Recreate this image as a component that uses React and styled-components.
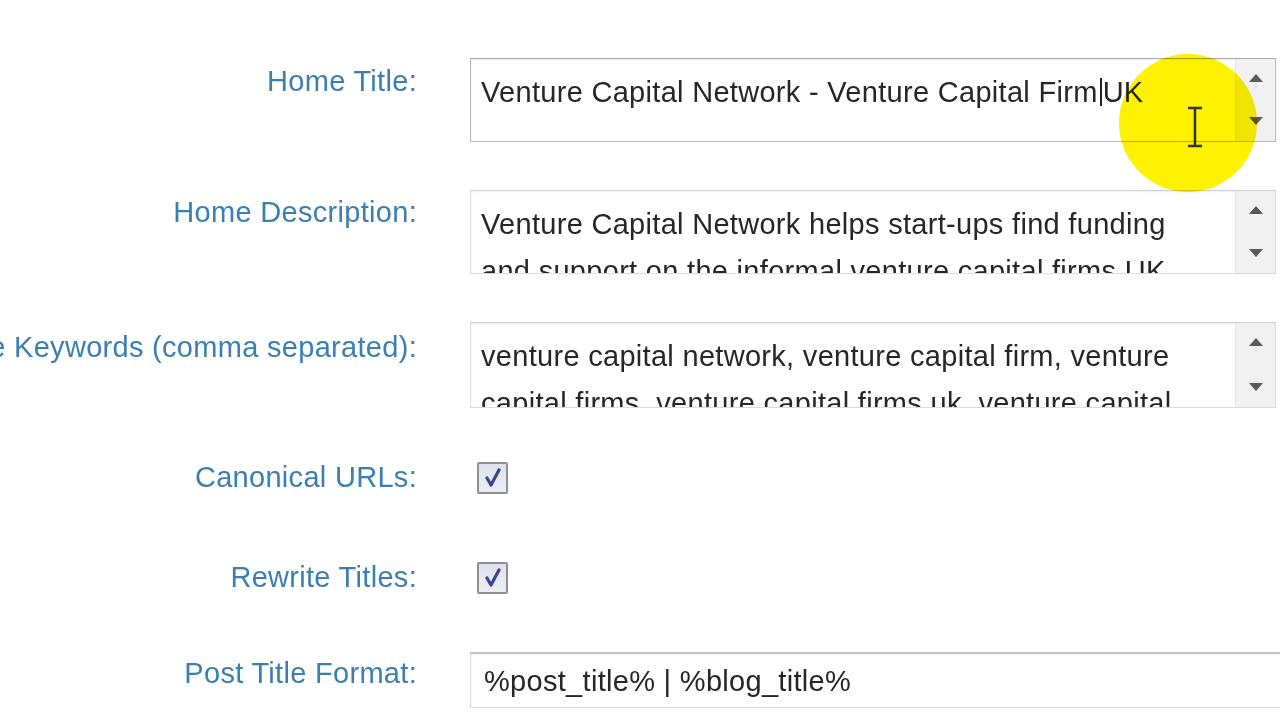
import React from "react";
import styled, { createGlobalStyle } from "styled-components";

const FONT = `Arial, "Liberation Sans", Helvetica, sans-serif`;

const Global = createGlobalStyle`
  html, body { margin: 0; padding: 0; background: #ffffff; }
  body { width: 1280px; height: 720px; overflow: hidden; font-family: ${FONT}; }
`;

const Page = styled.div`
  position: relative;
  width: 1280px;
  height: 720px;
  overflow: hidden;
  background: #fff;
  font-family: ${FONT};
  letter-spacing: 0.3px;
`;

const TopLine = styled.div`
  margin-top: -27px;
  margin-left: 527px;
  font-size: 29px;
  line-height: 33px;
  color: #6a6a6a;
  height: 33px;
`;

const Form = styled.div`
  display: flex;
  flex-direction: column;
`;

const Row = styled.div`
  display: grid;
  grid-template-columns: 417px 1fr;
  column-gap: 53px;
  align-items: ${(p) => (p.$center ? "center" : "start")};
  margin-top: ${(p) => p.$top}px;
`;

const Label = styled.div`
  display: flex;
  justify-content: flex-end;
  white-space: nowrap;
  font-family: ${FONT};
  font-size: 29px;
  line-height: 33px;
  color: #3b7fb0;
  padding-top: ${(p) => p.$pad || 0}px;
`;

const Box = styled.div`
  display: flex;
  width: 806px;
  height: ${(p) => p.$h}px;
  box-sizing: border-box;
  border: 1px solid ${(p) => (p.$focus ? "#b8b8b8" : "#dcdcdc")};
  border-top-color: ${(p) => (p.$focus ? "#a9a9a9" : "#d0d0d0")};
  box-shadow: inset 0 1px 2px rgba(0, 0, 0, 0.07);
  background: #fff;
`;

const BoxText = styled.div`
  flex: 1;
  overflow: hidden;
  padding: 10px 50px 0 10px;
  font-family: ${FONT};
  font-size: 29px;
  line-height: 47px;
  color: #262626;
  white-space: pre-wrap;
`;

const Caret = styled.span`
  display: inline-block;
  width: 2px;
  height: 28px;
  margin: 0 1px -4px 2px;
  background: #222;
`;

const Scroll = styled.div`
  width: 39px;
  display: flex;
  flex-direction: column;
  justify-content: space-between;
  align-items: center;
  padding: 15px 0 16px;
  background: #f1f1f1;
  border-left: 1px solid #e4e4e4;
`;

const Arrow = styled.div`
  width: 0;
  height: 0;
  border-left: 7px solid transparent;
  border-right: 7px solid transparent;
  ${(p) =>
    p.$down
      ? "border-top: 8px solid #5a5a5a;"
      : "border-bottom: 8px solid #5a5a5a;"}
`;

const Check = styled.div`
  width: 31px;
  height: 32px;
  box-sizing: border-box;
  margin-left: 7px;
  border: 2px solid #8b8f96;
  border-radius: 2px;
  background: linear-gradient(#dfe2ec, #eceef4);
  display: flex;
  align-items: center;
  justify-content: center;
`;

const Input = styled.div`
  height: 56px;
  box-sizing: border-box;
  margin-right: -20px;
  border: 1px solid #dcdcdc;
  border-top: 2px solid #c4c4c4;
  box-shadow: inset 0 1px 2px rgba(0, 0, 0, 0.06);
  padding: 4px 0 0 13px;
  font-family: ${FONT};
  font-size: 29px;
  line-height: 47px;
  color: #262626;
`;

const Highlight = styled.div`
  position: absolute;
  left: 1119px;
  top: 54px;
  width: 138px;
  height: 138px;
  border-radius: 50%;
  background: #fff200;
  mix-blend-mode: multiply;
  pointer-events: none;
`;

const IBeam = styled.svg`
  position: absolute;
  left: 1186px;
  top: 106px;
`;

function TextArea({ h, focus, children }) {
  return (
    <Box $h={h} $focus={focus}>
      <BoxText>{children}</BoxText>
      <Scroll>
        <Arrow />
        <Arrow $down />
      </Scroll>
    </Box>
  );
}

function CheckBox() {
  return (
    <Check>
      <svg width="20" height="20" viewBox="0 0 20 20">
        <path d="M4 10 L8 17 L16 2" fill="none" stroke="#3a4590" strokeWidth="3.2" strokeLinecap="round" strokeLinejoin="round" />
      </svg>
    </Check>
  );
}

export default function App() {
  return (
    <Page>
      <Global />
      <TopLine>Disabled</TopLine>
      <Form>
        <Row $top={52}>
          <Label $pad={7}>Home Title:</Label>
          <TextArea h={84} focus>
            Venture Capital Network - Venture Capital Firm<Caret />UK
          </TextArea>
        </Row>
        <Row $top={48}>
          <Label $pad={6}>Home Description:</Label>
          <TextArea h={84}>
            Venture Capital Network helps start-ups find funding and support on the informal venture capital firms UK
          </TextArea>
        </Row>
        <Row $top={48}>
          <Label $pad={9}>Home Keywords (comma separated):</Label>
          <TextArea h={86}>
            venture capital network, venture capital firm, venture capital firms, venture capital firms uk, venture capital
          </TextArea>
        </Row>
        <Row $top={53} $center>
          <Label>Canonical URLs:</Label>
          <CheckBox />
        </Row>
        <Row $top={67} $center>
          <Label>Rewrite Titles:</Label>
          <CheckBox />
        </Row>
        <Row $top={58}>
          <Label $pad={5}>Post Title Format:</Label>
          <Input>%post_title% | %blog_title%</Input>
        </Row>
      </Form>
      <Highlight />
      <IBeam width="18" height="42" viewBox="0 0 18 42">
        <path d="M2 2 H16 M9 2 V40 M2 40 H16" stroke="#333" strokeWidth="2.5" fill="none" />
      </IBeam>
    </Page>
  );
}
